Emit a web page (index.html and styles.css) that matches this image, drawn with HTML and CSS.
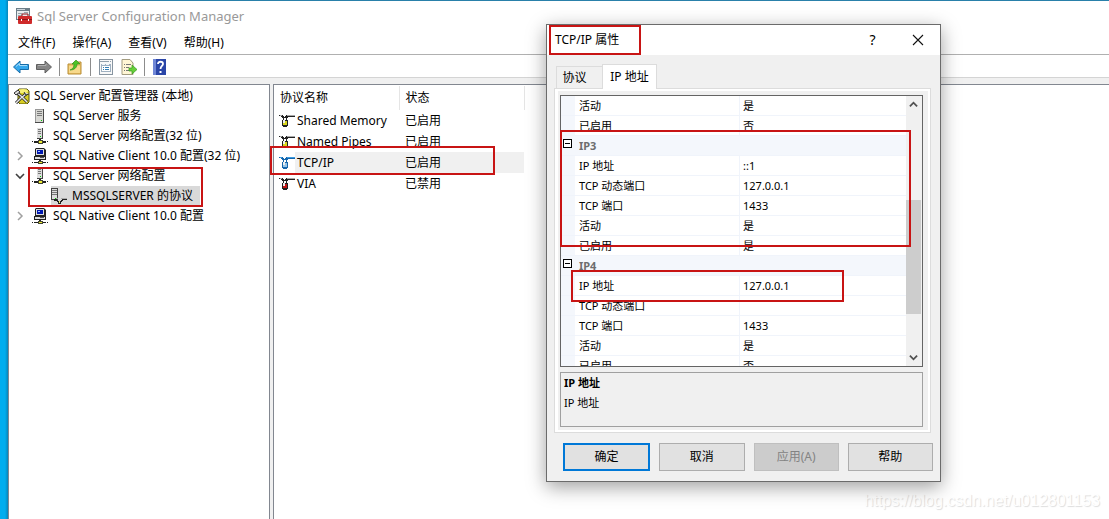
FILE: index.html
```
<!DOCTYPE html>
<html lang="zh-CN">
<head>
<meta charset="utf-8">
<meta name="viewport" content="width=device-width, initial-scale=1">
<title>Sql Server Configuration Manager</title>
<link rel="stylesheet" href="styles.css">
</head>
<body>
<svg class="symbols" aria-hidden="true">
  <symbol id="server" viewBox="0 0 16 16">
    <path d="M3 1h9v14H3z" fill="#4a4a4a"/><path d="M3 1h8v13H3z" fill="#999"/><path d="M4 2h7v12H4z" fill="#d8d8d4"/>
    <path d="M5 3h5v1H5zM5 5h5v1H5zM5 7h5v1H5z" fill="#777"/><path d="M9 12h1v1H9z" fill="#0c0"/>
  </symbol>
  <symbol id="netserver" viewBox="0 0 16 16">
    <path d="M5 0h6v11H5z" fill="#444"/><path d="M5 0h5v10H5z" fill="#ddd"/>
    <path d="M6 1h3v1H6zM6 3h3v1H6zM6 5h3v1H6z" fill="#777"/><path d="M8 8h1v1H8z" fill="#0c0"/>
    <path d="M7 11h2v2H7zM0 13h1v1H0zM2 13h12v2H2zM15 13h1v1h-1z" fill="#222"/><path d="M6 12h5v4H6z" fill="#443"/><path d="M7 13h3v2H7z" fill="#ee3"/>
  </symbol>
  <symbol id="client" viewBox="0 0 16 16">
    <path d="M4 0h8l2 2v6H3V1z" fill="#222"/><path d="M4 1h8v6H4z" fill="#ddd"/><path d="M5 2h6v4H5z" fill="#0018b0"/><path d="M6 3h2v1H6z" fill="#a6bfff"/>
    <path d="M2 8h12v4H2z" fill="#222"/><path d="M3 9h10v2H3z" fill="#ddd"/><path d="M8 9h4v1H8z" fill="#555"/>
    <path d="M7 12h2v1H7zM0 14h1v1H0zM2 14h12v1H2zM15 14h1v1h-1z" fill="#222"/><path d="M6 13h5v3H6z" fill="#443"/><path d="M7 14h3v1H7z" fill="#ee3"/>
  </symbol>
  <symbol id="serverproto" viewBox="0 0 16 16">
    <path d="M0 0h7v12H0z" fill="#444"/><path d="M1 1h5v10H1z" fill="#ddd"/><path d="M1 2h5v1H1zM1 4h5v1H1zM1 6h5v1H1z" fill="#777"/><path d="M4 10h1v1H4z" fill="#0c0"/>
    <path d="M3 11h3v1h1v1h3v-1h1v-1h5v1h-4v1h-1v1h-1v2H7v-2H6v-1H3z" fill="#222"/><path d="M10 10h6v1h-6zM5 10h2v1H5z" fill="#aaa"/><path d="M8 13h1v2H8z" fill="#eeea70"/>
  </symbol>
  <symbol id="plug" viewBox="0 0 16 16">
    <path d="M0 2h4v1h1v1h1V3h1V2h9v2H9v1H8v2h1v6H8v1H4v-1H3V7h1V5H3V4H2V3H0z" fill="currentColor"/>
    <path d="M8 2h8v1H8zM1 2h2v1H1z" fill="var(--arm)"/><path d="M5 5h2v2H5z" fill="#fff"/><path d="M4 8h4v4H4z" fill="var(--tip)"/><path d="M4 7h2v3H4z" fill="#eee"/>
  </symbol>
  <symbol id="right" viewBox="0 0 10 10"><path d="M3 1l4 4-4 4" fill="none" stroke="#a0a0a0" stroke-width="1.5"/></symbol>
  <symbol id="down" viewBox="0 0 10 10"><path d="M1 3l4 4 4-4" fill="none" stroke="#404040" stroke-width="1.6"/></symbol>
</svg>

<div class="desktop">
  <main class="window">
    <header class="titlebar">
      <svg class="icon" viewBox="0 0 16 16"><path d="M0 0h14v12H0z" fill="#6d7e88"/><path d="M1 3h12v8H1z" fill="#e8ecee"/><path d="M1 1h8v1H1z" fill="#cdd6dc"/><path d="M2 5h4v1H2zM2 7h4v1H2zM8 4h4v1H8z" fill="#9aa6ad"/><path d="M6 8V6h6v2" fill="none" stroke="#8b1518"/><rect x="2" y="8" width="14" height="8" rx="1" fill="#cf2a2a"/><path d="M2 11h14v1H2z" fill="#8b1518"/><path d="M5 11h1v2H5zM12 11h1v2h-1z" fill="#fff"/></svg>
      <span>Sql Server Configuration Manager</span>
    </header>
    <nav class="menu">
      <button>文件(F)</button><button>操作(A)</button><button>查看(V)</button><button>帮助(H)</button>
    </nav>
    <div class="toolbar">
      <button aria-label="后退"><svg class="icon" viewBox="0 0 16 16"><path d="M0.500 8l6.500-6v3.500h8.500v5H7V14z" fill="#35a8ec" stroke="#176ca8"/><path d="M3 7.500l3.500-3V6.500H14" fill="none" stroke="#a5dcfa"/></svg></button>
      <button aria-label="前进"><svg class="icon" viewBox="0 0 16 16"><path d="M15.500 8L9 2v3.500H0.500v5H9V14z" fill="#858585" stroke="#5f5f5f"/><path d="M2 6.500h8V5" fill="none" stroke="#b0b0b0"/></svg></button>
      <i class="rule"></i>
      <button aria-label="上一级"><svg class="icon" viewBox="0 0 16 16"><path d="M1 5h5l1-2h7v12H1z" fill="#edc66c" stroke="#b98d35"/><path d="M2 7h11v7H2z" fill="#f7d98c"/><path d="M3 11c3-1 4-3 4-6H5l4-4 4 4h-3c0 4-3 6-7 6z" fill="#4ec326" stroke="#2a8c15" stroke-width=".6"/></svg></button>
      <i class="rule"></i>
      <button aria-label="属性"><svg class="icon" viewBox="0 0 16 16"><path d="M1 0h14v16H1z" fill="#8794a0"/><path d="M2 1h12v14H2z" fill="#f8f8f8"/><path d="M2 2h9v1H2zM12 2h1v1h-1z" fill="#92a0ac"/><path d="M3 5h10v8H3z" fill="#9fb0c0"/><path d="M4 7h8v5H4z" fill="#fff"/><path d="M4 5h3v1H4zM8 5h3v1H8z" fill="#eef5fb"/><path d="M5 8h1v1H5zM7 8h4v1H7zM5 10h1v1H5zM7 10h4v1H7z" fill="#347fb5"/></svg></button>
      <button aria-label="导出列表"><svg class="icon" viewBox="0 0 16 16"><path d="M1 .5h8L12 4v11.500H1z" fill="#fff6d5" stroke="#a39c80"/><path d="M3 5.500h1M5 5.500h5M3 8.500h1M5 8.500h3M3 11.500h1M5 11.500h4" stroke="#777"/><path d="M8 9h3V6l5 4.500-5 4.500v-3H8z" fill="#67cf3b" stroke="#359b1c" stroke-width=".7"/></svg></button>
      <i class="rule"></i>
      <button aria-label="帮助"><svg class="icon" viewBox="0 0 16 16"><path d="M1 0h13v16H1z" fill="#2b46a8"/><path d="M1 0h3v16H1z" fill="#7087d6"/><path d="M6 5c0-3 5-3 5 0 0 2-2.500 2-2.500 5" fill="none" stroke="#fff" stroke-width="1.800"/><path d="M7.500 12h2v2h-2z" fill="#fff"/></svg></button>
    </div>

    <div class="panes">
      <section class="tree">
        <ul>
          <li class="root"><svg class="icon" viewBox="0 0 16 16"><path d="M5 1h8l2 2v11l-2 2H6l-2-2V2z" fill="#d8cd23" stroke="#55520d"/><ellipse cx="9" cy="3" rx="5" ry="2" fill="#f7ef75"/><path d="M2 4l5 4 6 6M12 6l-5 4-5 5" fill="none" stroke="#222" stroke-width="3"/><path d="M2 4l5 4 6 6M12 6l-5 4-5 5" fill="none" stroke="#e6e6e6" stroke-width="1.500"/><path d="M0 5l4-3 2 2-4 3zM10 4l2 3 3-1" fill="#ddd" stroke="#333"/></svg><span>SQL Server 配置管理器 (本地)</span></li>
          <li><i class="arrow"></i><svg class="icon"><use href="#server"/></svg><span>SQL Server 服务</span></li>
          <li><i class="arrow"></i><svg class="icon"><use href="#netserver"/></svg><span>SQL Server 网络配置(32 位)</span></li>
          <li><svg class="arrow"><use href="#right"/></svg><svg class="icon"><use href="#client"/></svg><span>SQL Native Client 10.0 配置(32 位)</span></li>
          <li><svg class="arrow"><use href="#down"/></svg><svg class="icon"><use href="#netserver"/></svg><span>SQL Server 网络配置</span></li>
          <li class="child"><div class="selected"><svg class="icon"><use href="#serverproto"/></svg><span>MSSQLSERVER 的协议</span></div></li>
          <li><svg class="arrow"><use href="#right"/></svg><svg class="icon"><use href="#client"/></svg><span>SQL Native Client 10.0 配置</span></li>
        </ul>
        <div class="mark mark-tree"></div>
      </section>
      <section class="list">
        <table class="protocols">
          <thead><tr><th>协议名称</th><th>状态</th></tr></thead>
          <tbody>
            <tr><td><div class="cell"><svg class="icon plug"><use href="#plug"/></svg><span>Shared Memory</span></div></td><td>已启用</td></tr>
            <tr><td><div class="cell"><svg class="icon plug"><use href="#plug"/></svg><span>Named Pipes</span></div></td><td>已启用</td></tr>
            <tr class="current"><td><div class="cell"><svg class="icon plug active"><use href="#plug"/></svg><span>TCP/IP</span></div></td><td>已启用</td></tr>
            <tr><td><div class="cell"><svg class="icon plug off"><use href="#plug"/></svg><span>VIA</span></div></td><td>已禁用</td></tr>
          </tbody>
        </table>
        <div class="mark mark-list"></div>
      </section>
    </div>
  </main>

  <div class="watermark">https://blog.csdn.net/u012801153</div>

  <section class="dialog" role="dialog" aria-labelledby="dialog-title">
    <header class="dialog-title">
      <h1 id="dialog-title">TCP/IP 属性</h1>
      <button aria-label="帮助">?</button>
      <button aria-label="关闭"><svg viewBox="0 0 12 12"><path d="M1 1l10 10M11 1L1 11" stroke="#111" stroke-width="1.100"/></svg></button>
    </header>
    <div class="dialog-body">
      <div class="tabs"><button class="tab">协议</button><button class="tab tab-on">IP 地址</button></div>
      <div class="sheet">
        <div class="sheet-inner">
          <div class="grid">
            <div class="grid-view">
              <table>
                <tbody>
                  <tr><td class="gutter"></td><td>活动</td><td>是</td></tr>
                  <tr><td class="gutter"></td><td>已启用</td><td>否</td></tr>
                  <tr class="group"><td class="gutter"><button class="fold" aria-label="折叠 IP3"></button></td><th colspan="2">IP3</th></tr>
                  <tr><td class="gutter"></td><td>IP 地址</td><td>::1</td></tr>
                  <tr><td class="gutter"></td><td>TCP 动态端口</td><td>127.0.0.1</td></tr>
                  <tr><td class="gutter"></td><td>TCP 端口</td><td>1433</td></tr>
                  <tr><td class="gutter"></td><td>活动</td><td>是</td></tr>
                  <tr><td class="gutter"></td><td>已启用</td><td>是</td></tr>
                  <tr class="group"><td class="gutter"><button class="fold" aria-label="折叠 IP4"></button></td><th colspan="2">IP4</th></tr>
                  <tr><td class="gutter"></td><td>IP 地址</td><td>127.0.0.1</td></tr>
                  <tr><td class="gutter"></td><td>TCP 动态端口</td><td></td></tr>
                  <tr><td class="gutter"></td><td>TCP 端口</td><td>1433</td></tr>
                  <tr><td class="gutter"></td><td>活动</td><td>是</td></tr>
                  <tr><td class="gutter"></td><td>已启用</td><td>否</td></tr>
                </tbody>
              </table>
            </div>
            <div class="scroll">
              <button aria-label="向上滚动"><svg viewBox="0 0 10 10"><path d="M1 7l4-4 4 4" fill="none" stroke="#505050" stroke-width="2"/></svg></button>
              <div class="track"><div class="thumb"></div></div>
              <button aria-label="向下滚动"><svg viewBox="0 0 10 10"><path d="M1 3l4 4 4-4" fill="none" stroke="#505050" stroke-width="2"/></svg></button>
            </div>
          </div>
          <div class="help"><strong>IP 地址</strong><span>IP 地址</span></div>
        </div>
      </div>
      <footer class="actions">
        <button class="primary">确定</button><button>取消</button><button disabled>应用(A)</button><button>帮助</button>
      </footer>
    </div>
    <div class="mark mark-title"></div>
    <div class="mark mark-ip3"></div>
    <div class="mark mark-ip4"></div>
  </section>
</div>
</body>
</html>
```
FILE: styles.css
```
* { box-sizing: border-box; }
body {
  margin: 0;
  font: 12px/20px "Noto Sans", "Noto Sans CJK SC", sans-serif;
  color: #000;
}
button { font: inherit; color: inherit; border: 0; padding: 0; background: none; }
ul { list-style: none; margin: 0; padding: 0; }
table { border-collapse: collapse; border-spacing: 0; }
th, td { padding: 0; text-align: left; font-weight: 400; }
.symbols { position: absolute; width: 0; height: 0; }
.icon { width: 16px; height: 16px; flex: none; display: block; }
.mark { position: absolute; border: 2px solid #c81414; pointer-events: none; }

.desktop {
  position: relative;
  display: flex;
  height: 100vh;
  padding-left: 8px;
  overflow: hidden;
  background: linear-gradient(90deg, #00adef 0 5px, #0785b9 8px);
}
.window {
  flex: 1;
  display: flex;
  flex-direction: column;
  background: #fff;
  border-top: 1px solid #2980aa;
}
.titlebar { display: flex; align-items: center; gap: 5px; height: 29px; padding-left: 8px; color: #999; font-size: 13px; }
.menu { display: flex; gap: 17px; height: 24px; padding: 2px 0 0 10px; align-items: center; }
.toolbar {
  display: flex;
  align-items: center;
  height: 24px;
  padding: 2px 0 0 5px;
  gap: 7px;
  border-top: 1px solid #b0b0b0;
  border-bottom: 1px solid #d4d4d4;
}
.rule { width: 1px; height: 18px; background: #8c8c8c; }
.panes { flex: 1; display: flex; gap: 3px; padding-top: 6px; background: #f0f0f0; min-height: 0; }
.tree, .list { position: relative; background: #fff; border: 1px solid #828790; border-bottom: 0; }
.tree { width: 262px; flex: none; padding-top: 1px; }
.tree li { display: flex; align-items: center; height: 20px; padding-left: 6px; white-space: nowrap; }
.tree span { padding-left: 5px; }
.tree .root { padding-left: 5px; }
.tree .root span { padding-left: 4px; }
.arrow { width: 10px; height: 10px; margin-right: 7px; flex: none; }
.tree .child { padding-left: 42px; }
.selected { display: flex; align-items: center; height: 20px; padding-right: 7px; background: #d9d9d9; }
.list { flex: 1; border-right: 0; padding-top: 1px; }
.protocols th { height: 24px; border-right: 1px solid #e5e5e5; padding-left: 6px; }
.protocols th:first-child { width: 125px; }
.protocols th:last-child { width: 125px; }
.protocols td { height: 21px; padding-left: 6px; }
.protocols td:first-child { padding-left: 5px; }
.cell { display: flex; align-items: center; gap: 2px; height: 20px; }
.current { background: linear-gradient(90deg, #fff 21px, #f0f0f0 21px); }
.plug { color: #222; --arm: #aaa; --tip: #d8d51c; }
.active { color: #1466ad; --arm: #3d9be0; --tip: #98c5e8; }
.off { --tip: #c31616; }

.dialog {
  position: absolute;
  left: 546px;
  top: 24px;
  width: 395px;
  border: 1px solid #6b6b6b;
  background: #f0f0f0;
  box-shadow: 0 5px 18px rgba(0, 0, 0, .38);
}
.dialog-title { display: flex; height: 30px; padding-left: 8px; background: #fff; align-items: center; }
.dialog-title h1 { flex: 1; margin: 0; font-size: 12px; font-weight: 400; }
.dialog-title button { width: 45px; height: 30px; font-size: 14px; }
.dialog-title svg { display: block; width: 12px; height: 12px; margin: auto; }
.dialog-body { padding: 9px 7px 10px; }
.tabs { display: flex; align-items: flex-end; padding-left: 2px; }
.tab { width: 46px; height: 22px; padding-right: 10px; border: 1px solid #dcdcdc; border-bottom: 0; border-right: 0; }
.tab-on { width: 55px; height: 25px; padding: 0; margin-bottom: -1px; background: #fff; border-right: 1px solid #dcdcdc; position: relative; }
.sheet { border: 1px solid #dcdcdc; background: #fff; padding: 2px 2px 2px 3px; margin-right: 2px; }
.sheet-inner { padding: 4px 5px 3px 2px; background: #f0f0f0; font-size: 11px; }
.grid { display: flex; height: 272px; border: 1px solid #646464; background: #fff; }
.grid-view { flex: 1; overflow: hidden; }
.grid table { width: 100%; table-layout: fixed; border-collapse: separate; }
.grid td, .grid th { height: 20px; padding-left: 4px; line-height: 19px; border-bottom: 1px solid #f0f4fb; white-space: nowrap; }
.grid td + td + td { width: 167px; padding-left: 3px; border-left: 1px solid #f0f4fb; }
.grid .gutter { width: 14px; padding: 0 0 0 2px; background: #f4f7fc; vertical-align: top; }
.grid .group th { background: #f4f7fc; color: #6d6d6d; font-weight: 700; }
.fold { display: block; width: 9px; height: 9px; margin-top: 3px; border: 1px solid #000; background: linear-gradient(#000, #000) center / 5px 1px no-repeat #fff; }
.scroll { display: flex; flex-direction: column; width: 16px; padding-right: 1px; background: #f0f0f0; }
.scroll button { height: 17px; }
.scroll svg { display: block; width: 9px; height: 9px; margin: auto; }
.track { flex: 1; padding-top: 87px; }
.thumb { height: 114px; background: #cdcdcd; }
.help { display: flex; flex-direction: column; height: 55px; margin-top: 5px; padding-left: 3px; border: 1px solid #a0a0a0; }
.actions { display: flex; gap: 9px; padding: 10px 0 0 9px; }
.actions button { flex: 1; height: 28px; border: 1px solid #adadad; background: #e1e1e1; }
.actions .primary { border: 2px solid #0078d7; }
.actions button:disabled { color: #838383; background: #ccc; border-color: #bfbfbf; }

.mark-tree { left: 19px; top: 82px; width: 175px; height: 40px; }
.mark-list { left: -4px; top: 61px; width: 225px; height: 29px; }
.mark-title { left: 2px; top: 0; width: 92px; height: 30px; }
.mark-ip3 { left: 13px; top: 105px; width: 351px; height: 117px; }
.mark-ip4 { left: 24px; top: 245px; width: 273px; height: 32px; }
.watermark {
  position: absolute;
  right: 9px;
  bottom: 8px;
  font: 16px/20px "Liberation Sans", Arial, sans-serif;
  color: #fff;
  text-shadow: 1px 1px 1px #ddd;
}
```
